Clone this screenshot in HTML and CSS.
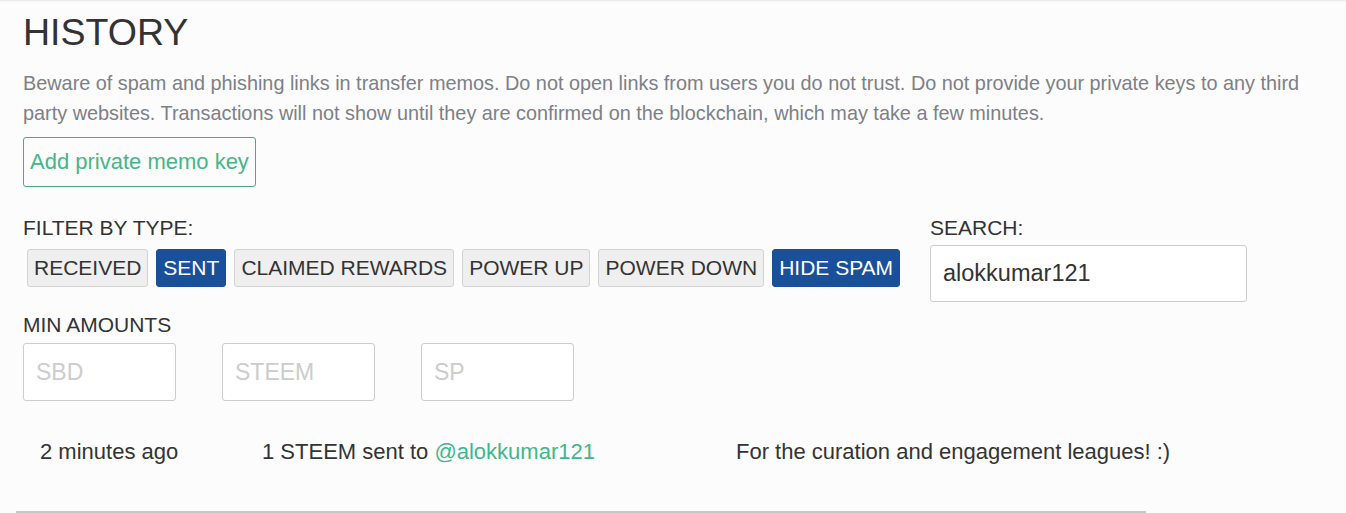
FILE: index.html
```html
<!DOCTYPE html>
<html lang="en">
<head>
    <meta charset="UTF-8">
    <meta name="viewport" content="width=device-width, initial-scale=1.0">
    <title>History</title>
    <link rel="stylesheet" href="styles.css">
</head>
<body>

<div class="wallet">
    <h1 class="title">HISTORY</h1>
    <p class="notice">Beware of spam and phishing links in transfer memos. Do not open links from users you do not trust. Do not provide your private keys to any third party websites. Transactions will not show until they are confirmed on the blockchain, which may take a few minutes.</p>
    <button class="memo-btn">Add private memo key</button>

    <div class="filters">
        <div class="filter-types">
            <label class="label">FILTER BY TYPE:</label>
            <div class="type-buttons">
                <button class="type">RECEIVED</button>
                <button class="type active">SENT</button>
                <button class="type">CLAIMED REWARDS</button>
                <button class="type">POWER UP</button>
                <button class="type">POWER DOWN</button>
                <button class="type active">HIDE SPAM</button>
            </div>
        </div>
        <div class="search">
            <label class="label">SEARCH:</label>
            <input class="search-input" type="text" value="alokkumar121">
        </div>
    </div>

    <div class="min-amounts">
        <label class="label">MIN AMOUNTS</label>
        <div class="amount-inputs">
            <input class="amount" type="text" placeholder="SBD">
            <input class="amount" type="text" placeholder="STEEM">
            <input class="amount" type="text" placeholder="SP">
        </div>
    </div>

    <!-- transfer list -->
    <div class="history">
        <div class="row">
            <span class="time">2 minutes ago</span>
            <span class="op">1 STEEM sent to <a href="#">@alokkumar121</a></span>
            <span class="memo">For the curation and engagement leagues! :)</span>
        </div>
    </div>
</div>

<div class="scrollbar"></div>

</body>
</html>
```

FILE: styles.css
```css
/* Page */
body {
    margin: 0;
    background: #fcfcfc;
    font-family: "Liberation Sans", Arial, sans-serif;
    color: #333;
    height: 513px;
    overflow: hidden;
    position: relative;
    box-shadow: inset 0 2px 2px -1px #e6e6e6;
}

.wallet {
    padding: 10px 23px 0 23px;
}

.title {
    margin: 0;
    font-size: 37.5px;
    font-weight: normal;
    line-height: 44px;
    color: #333;
}

.notice {
    margin: 14px 0 9px 0;
    font-size: 19.85px;
    line-height: 30px;
    color: #7c8087;
    max-width: 1300px;
}

/* Memo key button */
.memo-btn {
    height: 50px;
    padding: 0 6px;
    font-family: inherit;
    font-size: 22px;
    color: #45b68a;
    background: transparent;
    border: 1px solid #4aaa80;
    border-radius: 3px;
}

/* Filters */
.filters {
    display: flex;
    margin-top: 29px;
}

.filter-types {
    width: 907px;
}

.label {
    display: block;
    font-size: 21px;
    line-height: 24px;
    color: #333;
}

.type-buttons {
    display: flex;
    gap: 8px;
    margin-top: 9px;
    padding-left: 4px;
}

.type {
    height: 38px;
    padding: 0 6px;
    font-family: inherit;
    font-size: 21px;
    color: #333;
    background: #efefef;
    border: 1px solid #d2d2d2;
    border-radius: 3px;
}

.type.active {
    background: #1a5099;
    border-color: #1a5099;
    color: #fff;
}

.search-input {
    display: block;
    width: 317px;
    height: 57px;
    box-sizing: border-box;
    margin-top: 5px;
    padding: 0 12px;
    font-family: inherit;
    font-size: 23.5px;
    color: #333;
    background: #fff;
    border: 1px solid #ccc;
    border-radius: 3px;
}

/* Min amounts */
.min-amounts {
    margin-top: 11px;
}

.amount-inputs {
    display: flex;
    gap: 46px;
    margin-top: 6px;
}

.amount {
    width: 153px;
    height: 58px;
    box-sizing: border-box;
    padding: 0 12px;
    font-family: inherit;
    font-size: 23px;
    background: #fff;
    border: 1px solid #ccc;
    border-radius: 3px;
}

.amount::placeholder {
    color: #ccc;
}

/* History rows */
.history {
    margin-top: 38px;
}

.row {
    display: flex;
    font-size: 22px;
    line-height: 26px;
    color: #333;
}

.time {
    width: 239px;
    padding-left: 17px;
    box-sizing: border-box;
}

.op {
    width: 474px;
}

.op a {
    color: #3db88c;
    text-decoration: none;
}

.scrollbar {
    position: absolute;
    left: 16px;
    bottom: 0;
    width: 1130px;
    height: 2px;
    background: #c6c6c6;
}
```
